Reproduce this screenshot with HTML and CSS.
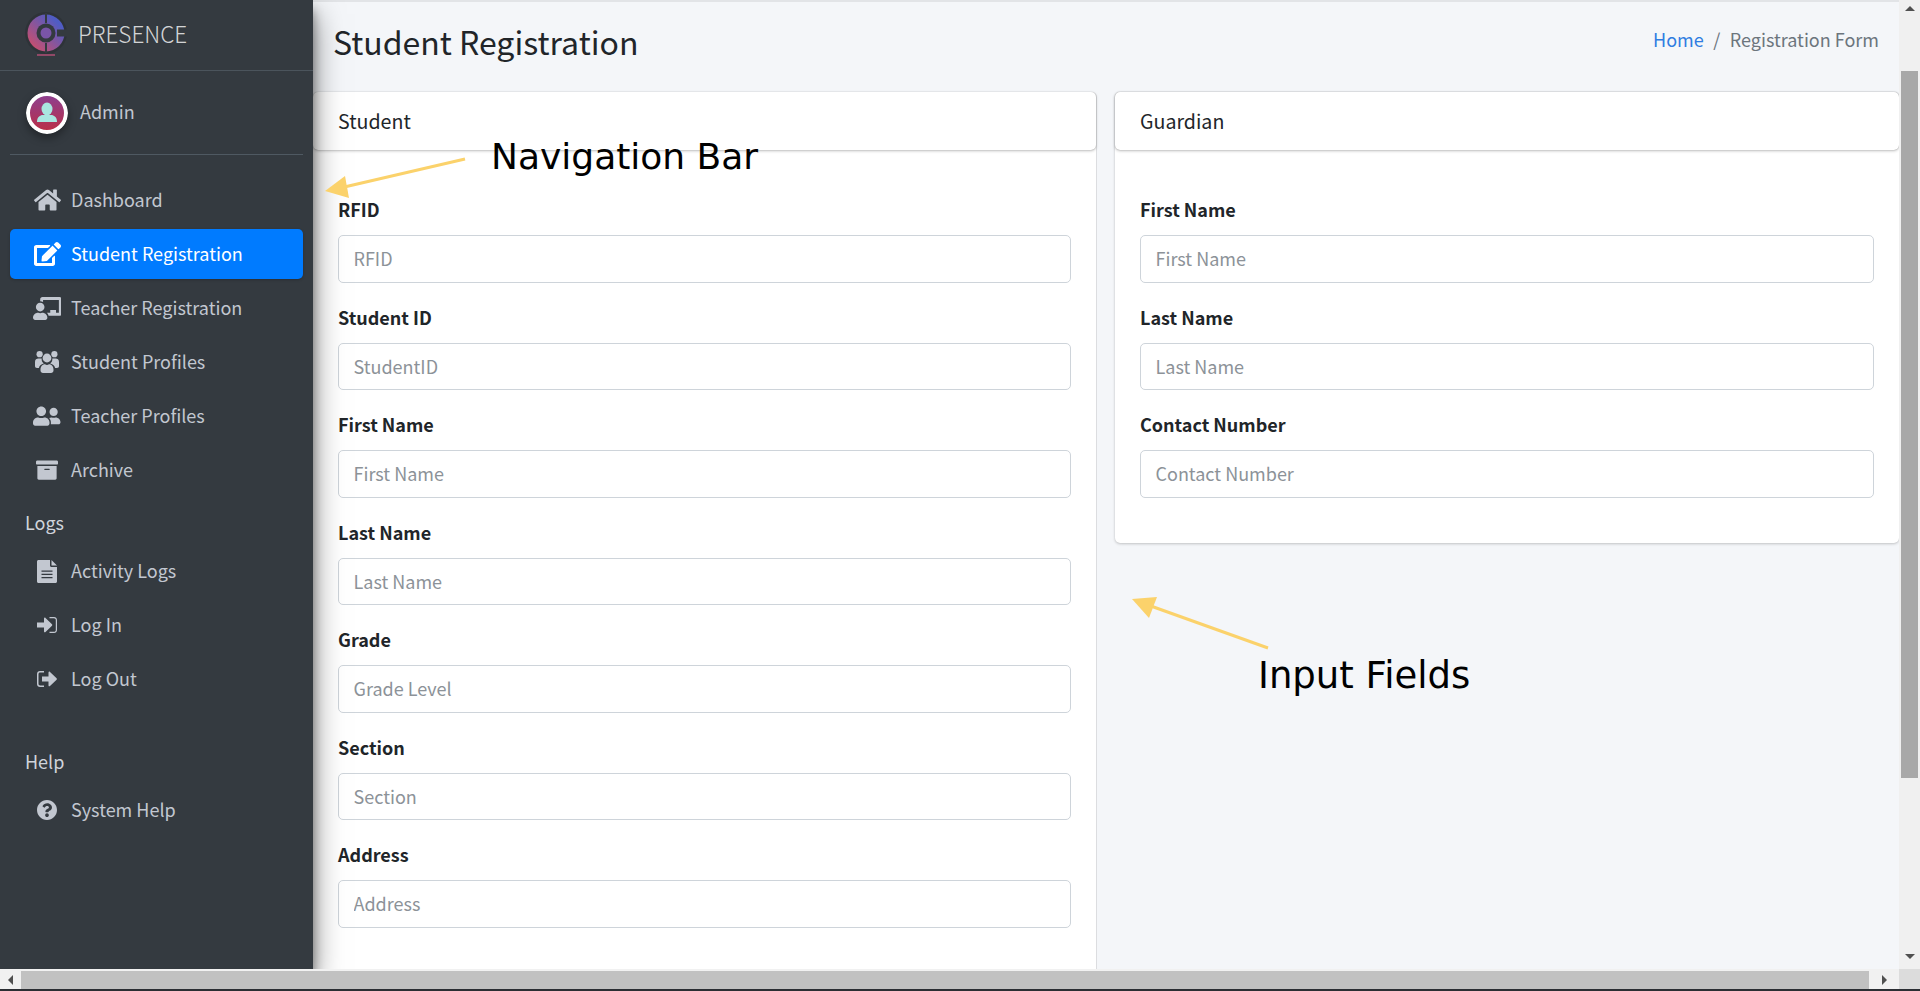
FILE: index.html
```html
<!DOCTYPE html>
<html lang="en">
<head>
  <meta charset="UTF-8" />
  <title>Student Registration</title>
  <link rel="stylesheet" href="styles.css">
</head>
<body>
  <div class="page">
    <div class="window">
      <aside class="sidebar">
        <div class="brand">
          <svg class="brand-logo" viewBox="0 0 44 48">
            <defs>
              <linearGradient id="logoGrad" x1="1" y1="0" x2="0" y2="1">
                <stop offset="0.2" stop-color="#4f5cc4"/>
                <stop offset="0.85" stop-color="#c24f72"/>
              </linearGradient>
            </defs>
            <circle cx="22" cy="22" r="21" fill="#2e3338"/>
            <circle cx="22" cy="22" r="18.5" fill="url(#logoGrad)"/>
            <rect x="33" y="18.5" width="11" height="7" fill="#343a40"/>
            <rect x="21" y="2" width="2" height="10" fill="#343a40"/>
            <rect x="21" y="32" width="2" height="10" fill="#343a40"/>
            <circle cx="22" cy="22" r="9.500" fill="#343a40"/>
            <circle cx="22" cy="22" r="5.500" fill="#7a55a8"/>
            <path d="M13 44h18" stroke="#b04f74" stroke-width="1.500"/>
          </svg>
          <span class="brand-text">PRESENCE</span>
        </div>

        <div class="user-panel">
          <svg class="avatar" viewBox="0 0 42 42">
            <defs>
              <linearGradient id="avatarGrad" x1="0" y1="0" x2="0" y2="1">
                <stop offset="0" stop-color="#8c3f92"/>
                <stop offset="1" stop-color="#bb2f45"/>
              </linearGradient>
            </defs>
            <circle cx="21" cy="21" r="19" fill="url(#avatarGrad)" stroke="#fff" stroke-width="4"/>
            <ellipse cx="21" cy="17" rx="5.500" ry="6.500" fill="#a9e6e0"/>
            <path d="M11 30c0-5 3-7 6-7h8c3 0 6 2 6 7z" fill="#a9e6e0"/>
          </svg>
          <span class="user-name">Admin</span>
        </div>

        <ul class="nav">
          <li><a class="nav-link"><span class="nav-icon"><svg class="icon-home" viewBox="0 0 576 512"><path d="M280.37 148.26L96 300.11V464a16 16 0 0 0 16 16l112.06-.29a16 16 0 0 0 15.92-16V368a16 16 0 0 1 16-16h64a16 16 0 0 1 16 16v95.64a16 16 0 0 0 16 16.05L464 480a16 16 0 0 0 16-16V300L295.67 148.26a12.19 12.19 0 0 0-15.3 0zM571.6 251.47L488 182.56V44.05a12 12 0 0 0-12-12h-56a12 12 0 0 0-12 12v72.61L318.47 43a48 48 0 0 0-61 0L4.34 251.47a12 12 0 0 0-1.6 16.9l25.5 31A12 12 0 0 0 45.15 301l235.22-193.74a12.19 12.19 0 0 1 15.3 0L530.9 301a12 12 0 0 0 16.9-1.6l25.5-31a12 12 0 0 0-1.7-16.93z"/></svg></span><span class="nav-text">Dashboard</span></a></li>
          <li><a class="nav-link active"><span class="nav-icon"><svg class="icon-edit" viewBox="0 0 576 512"><path d="M402.6 83.2l90.2 90.2c3.8 3.8 3.8 10 0 13.8L274.4 405.6l-92.8 10.3c-12.4 1.4-22.9-9.1-21.5-21.5l10.3-92.8L388.8 83.2c3.8-3.8 10-3.8 13.8 0zm162-22.9l-48.8-48.8c-15.2-15.2-39.9-15.2-55.2 0l-35.4 35.4c-3.8 3.8-3.8 10 0 13.8l90.2 90.2c3.8 3.8 10 3.8 13.8 0l35.4-35.4c15.2-15.3 15.2-40 0-55.2zM384 346.2V448H64V128h229.8c3.2 0 6.2-1.3 8.5-3.5l40-40c7.6-7.6 2.2-20.5-8.5-20.5H48C21.5 64 0 85.5 0 112v352c0 26.5 21.5 48 48 48h352c26.5 0 48-21.5 48-48V306.2c0-10.7-12.9-16-20.5-8.5l-40 40c-2.2 2.3-3.5 5.3-3.5 8.5z"/></svg></span><span class="nav-text">Student Registration</span></a></li>
          <li><a class="nav-link"><span class="nav-icon"><svg class="icon-board" viewBox="0 0 640 512"><path d="M208 352c-2.39 0-4.78.35-7.06 1.09C187.98 357.3 174.35 360 160 360c-14.35 0-27.98-2.7-40.95-6.91-2.28-.74-4.66-1.09-7.05-1.09C49.94 352-.33 402.48 0 464.62.14 490.88 21.73 512 48 512h224c26.27 0 47.86-21.12 48-47.38.33-62.14-49.94-112.62-112-112.62zm-48-32c53.02 0 96-42.98 96-96s-42.98-96-96-96-96 42.98-96 96 42.98 96 96 96zM592 0H208c-26.47 0-48 22.25-48 49.59V96c23.42 0 45.1 6.78 64 17.8V64h352v288h-64v-64H384v64h-76.24c19.1 16.69 33.12 38.73 39.69 64H592c26.47 0 48-22.25 48-49.59V49.59C640 22.25 618.47 0 592 0z"/></svg></span><span class="nav-text">Teacher Registration</span></a></li>
          <li><a class="nav-link"><span class="nav-icon"><svg class="icon-group" viewBox="0 0 24 22"><circle cx="4.600" cy="3.200" r="3.100"/><circle cx="19.400" cy="3.200" r="3.100"/><circle cx="12" cy="7" r="4.400"/><path d="M0 11c0-2.400 1.600-3.400 3.400-3.400h3.300c-.3 2.200 .6 4 2.100 5-2.800 .8-4.600 2.600-4.900 4.400H2c-1.300 0-2-.8-2-2z"/><path d="M24 11c0-2.400-1.600-3.400-3.400-3.400h-3.300c.3 2.200-.6 4-2.100 5 2.800 .8 4.600 2.600 4.900 4.400H22c1.300 0 2-.8 2-2z"/><path d="M5.500 18.500c0-3.400 2.500-5.200 4.500-5.200.7 .4 1.300 .6 2 .6s1.300-.2 2-.6c2 0 4.500 1.800 4.500 5.200v1c0 1.500-1.100 2.500-2.500 2.500H8c-1.400 0-2.500-1-2.500-2.500z"/></svg></span><span class="nav-text">Student Profiles</span></a></li>
          <li><a class="nav-link"><span class="nav-icon"><svg viewBox="0 0 640 512"><path d="M192 256c61.900 0 112-50.100 112-112S253.900 32 192 32 80 82.100 80 144s50.100 112 112 112zm76.800 32h-8.300c-20.800 10-43.900 16-68.500 16s-47.600-6-68.500-16h-8.300C51.600 288 0 339.600 0 403.200V432c0 26.500 21.500 48 48 48h288c26.500 0 48-21.500 48-48v-28.800c0-63.600-51.600-115.200-115.200-115.200zM480 256c53 0 96-43 96-96s-43-96-96-96-96 43-96 96 43 96 96 96zm48 32h-3.800c-13.900 4.800-28.600 8-44.200 8s-30.300-3.200-44.200-8H432c-20.400 0-39.200 5.900-55.700 15.400 24.400 26.300 39.700 61.200 39.700 99.800v38.400c0 2.200-.5 4.300-.6 6.400H592c26.500 0 48-21.500 48-48 0-61.900-50.100-112-112-112z"/></svg></span><span class="nav-text">Teacher Profiles</span></a></li>
          <li><a class="nav-link"><span class="nav-icon"><svg viewBox="0 0 512 512"><path d="M32 448c0 17.700 14.300 32 32 32h384c17.700 0 32-14.300 32-32V160H32v288zm160-212c0-6.600 5.400-12 12-12h104c6.600 0 12 5.400 12 12v8c0 6.600-5.400 12-12 12H204c-6.600 0-12-5.400-12-12v-8zM480 32H32C14.300 32 0 46.300 0 64v48c0 8.800 7.200 16 16 16h480c8.800 0 16-7.200 16-16V64c0-17.700-14.300-32-32-32z"/></svg></span><span class="nav-text">Archive</span></a></li>

          <li class="nav-header">Logs</li>
          <li><a class="nav-link"><span class="nav-icon"><svg class="icon-file" viewBox="0 0 20 23"><path d="M13 0H1.500C.7 0 0 .7 0 1.500v20C0 22.300 .7 23 1.500 23h17c.8 0 1.500-.7 1.500-1.500V7h-5.500C13.700 7 13 6.300 13 5.500zM14.500 0v5.500H20z"/><path d="M4.500 10.500h11v1.300h-11zM4.500 13.700h11V15h-11zM4.500 16.900h11v1.300h-11z" fill="#343a40"/></svg></span><span class="nav-text">Activity Logs</span></a></li>
          <li><a class="nav-link"><span class="nav-icon"><svg class="icon-sign" viewBox="0 0 20 16"><path d="M0 5.500h7V1.500c0-.8 .9-1.200 1.500-.6l6.500 6.300c.4 .4 .4 1.100 0 1.500l-6.500 6.300c-.6 .6-1.500 .2-1.500-.6v-4H0z"/><path d="M12.500 0H17c1.700 0 3 1.300 3 3v10c0 1.700-1.300 3-3 3h-4.500v-1.200H17c1 0 1.800-.8 1.800-1.800V3c0-1-.8-1.800-1.800-1.800h-4.500z"/></svg></span><span class="nav-text">Log In</span></a></li>
          <li><a class="nav-link"><span class="nav-icon"><svg class="icon-sign" viewBox="0 0 20 16"><path d="M7 0H3C1.300 0 0 1.300 0 3v10c0 1.700 1.300 3 3 3h4v-1.600H3.200c-1 0-1.700-.7-1.700-1.700V3.300c0-1 .7-1.700 1.700-1.700H7z"/><path d="M5 5.500h6.500V1.500c0-.8 .9-1.200 1.500-.6l6.600 6.300c.4 .4 .4 1.100 0 1.500L13 15c-.6 .6-1.500 .2-1.500-.6v-4H5z"/></svg></span><span class="nav-text">Log Out</span></a></li>

          <li class="nav-header help">Help</li>
          <li><a class="nav-link"><span class="nav-icon"><svg class="icon-help" viewBox="8 8 496 496"><path d="M504 256c0 136.997-111.043 248-248 248S8 392.997 8 256C8 119.083 119.043 8 256 8s248 111.083 248 248zM262.655 90c-54.497 0-89.255 22.957-116.549 63.758-3.536 5.286-2.353 12.415 2.715 16.258l34.699 26.31c5.205 3.947 12.621 3.008 16.665-2.122 17.864-22.658 30.113-35.797 57.303-35.797 20.429 0 45.698 13.148 45.698 32.958 0 14.976-12.363 22.667-32.534 33.976C247.128 238.528 216 254.941 216 296v4c0 6.627 5.373 12 12 12h56c6.627 0 12-5.373 12-12v-1.333c0-28.462 83.186-29.647 83.186-106.667 0-58.002-60.165-102-116.531-102zM256 338c-25.365 0-46 20.635-46 46 0 25.364 20.635 46 46 46s46-20.636 46-46c0-25.365-20.635-46-46-46z"/></svg></span><span class="nav-text">System Help</span></a></li>
        </ul>
      </aside>

      <main class="content">
        <header class="content-header">
          <h1>Student Registration</h1>
          <ol class="breadcrumb">
            <li><a>Home</a></li>
            <li class="sep">/</li>
            <li>Registration Form</li>
          </ol>
        </header>

        <div class="columns">
          <section class="card card-student">
            <div class="card-header">Student</div>
            <form class="card-body">
              <div class="form-group"><label>RFID</label><input type="text" placeholder="RFID"></div>
              <div class="form-group"><label>Student ID</label><input type="text" placeholder="StudentID"></div>
              <div class="form-group"><label>First Name</label><input type="text" placeholder="First Name"></div>
              <div class="form-group"><label>Last Name</label><input type="text" placeholder="Last Name"></div>
              <div class="form-group"><label>Grade</label><input type="text" placeholder="Grade Level"></div>
              <div class="form-group"><label>Section</label><input type="text" placeholder="Section"></div>
              <div class="form-group"><label>Address</label><input type="text" placeholder="Address"></div>
            </form>
          </section>

          <section class="card card-guardian">
            <div class="card-header">Guardian</div>
            <form class="card-body">
              <div class="form-group"><label>First Name</label><input type="text" placeholder="First Name"></div>
              <div class="form-group"><label>Last Name</label><input type="text" placeholder="Last Name"></div>
              <div class="form-group"><label>Contact Number</label><input type="text" placeholder="Contact Number"></div>
            </form>
          </section>
        </div>
      </main>

      <div class="vscroll">
        <span class="arrow arrow-up"></span>
        <div class="vscroll-thumb"></div>
        <span class="arrow arrow-down"></span>
      </div>
    </div>

    <div class="hscroll">
      <div class="hscroll-btn"><span class="arrow arrow-left"></span></div>
      <div class="hscroll-thumb"></div>
      <div class="hscroll-btn"><span class="arrow arrow-right"></span></div>
      <div class="hscroll-corner"></div>
    </div>
    <div class="taskbar"></div>

    <!-- annotations pasted on top of the screenshot -->
    <span class="note note-nav">Navigation Bar</span>
    <span class="note note-input">Input Fields</span>
    <svg class="note-arrows" viewBox="0 0 1920 991">
      <path d="M465 159L340 188" stroke="#fbd26b" stroke-width="3" fill="none"/>
      <path d="M325 191L345 176L349 198z" fill="#fbd26b"/>
      <path d="M1268 648L1148 605" stroke="#fbd26b" stroke-width="3" fill="none"/>
      <path d="M1132 599L1157 597L1149 618z" fill="#fbd26b"/>
    </svg>
  </div>
</body>
</html>
```

FILE: styles.css
```css
:root {
  --sidebar: #343a40;
  --sidebar-text: #c2c7d0;
  --content-bg: #f4f6f9;
  --text: #212529;
  --accent: #007bff;
}

* {
  box-sizing: border-box;
}

body {
  margin: 0;
  overflow: hidden;
  font-family: "Noto Sans CJK SC", "Noto Sans", sans-serif;
  font-size: 18px;
  line-height: 30px;
  color: var(--text);
  background: var(--content-bg);
}

.page {
  position: relative;
  width: 1920px;
  height: 991px;
  display: flex;
  flex-direction: column;
  overflow: hidden;
}

.window {
  display: flex;
  height: 969px;
  overflow: hidden;
}

/* sidebar */
.sidebar {
  position: relative;
  z-index: 2;
  flex: 0 0 313px;
  background: var(--sidebar);
  color: var(--sidebar-text);
  box-shadow: 0 14px 28px rgba(0,0,0,0.5), 0 10px 10px rgba(0,0,0,0.38);
}

.brand {
  display: flex;
  align-items: center;
  height: 71px;
  padding: 0 0 1px 24px;
  border-bottom: 1px solid #4b545c;
}

.brand-logo {
  width: 44px;
  height: 48px;
  margin-right: 10px;
}

.brand-text {
  margin-bottom: 3px;
  font-size: 22.5px;
  font-weight: 300;
  color: rgba(255,255,255,0.8);
}

.user-panel {
  display: flex;
  align-items: center;
  height: 84px;
  margin: 0 10px;
  padding-left: 16px;
  border-bottom: 1px solid #4f5962;
}

.avatar {
  width: 42px;
  height: 42px;
  margin-right: 12px;
  border-radius: 50%;
  box-shadow: 0 4px 8px rgba(0,0,0,0.35);
}

.user-name {
  margin-bottom: 3px;
}

.nav {
  list-style: none;
  margin: 0;
  padding: 20px 10px 0;
}

.nav-link {
  display: flex;
  align-items: center;
  height: 50px;
  margin-bottom: 4px;
  padding-left: 20px;
  border-radius: 5px;
  white-space: nowrap;
}

.nav-link.active {
  background: var(--accent);
  color: #fff;
  box-shadow: 0 1px 3px rgba(0,0,0,0.2);
}

.nav-text {
  margin-bottom: 2px;
}

.nav-icon {
  flex: 0 0 34px;
  margin-right: 7px;
  display: flex;
  justify-content: center;
}

.nav-icon svg {
  height: 22px;
  fill: currentColor;
}

.nav-icon .icon-home,
.nav-icon .icon-edit {
  height: 24px;
}

.nav-icon .icon-board {
  height: 23px;
}

.nav-icon .icon-file {
  height: 23px;
}

.nav-icon .icon-sign {
  height: 16px;
}

.nav-icon .icon-help {
  height: 20px;
}

.nav-header {
  height: 47px;
  padding: 8px 0 0 15px;
  color: #d0d4db;
}

.nav-header.help {
  margin-top: 34px;
}

/* content */
.content {
  flex: 1;
  min-width: 0;
  border-top: 2px solid #e2e4e7;
}

.content-header {
  display: flex;
  justify-content: space-between;
  height: 90px;
  padding: 17px 20px 0;
}

h1 {
  margin: 0;
  font-size: 32px;
  font-weight: 400;
  line-height: 44px;
}

.breadcrumb {
  display: flex;
  list-style: none;
  margin: 5px 0 0;
  padding: 0;
  color: #6c757d;
}

.breadcrumb a {
  color: #2f7de1;
}

.breadcrumb .sep {
  padding: 0 9.5px;
}

.columns {
  display: grid;
  grid-template-columns: 784px 784px;
  gap: 18px;
  align-items: start;
}

.card {
  background: #fff;
  border-radius: 5px;
}

.card-student {
  height: 900px;
  border-right: 1px solid #dcdde0;
}

.card-guardian {
  box-shadow: 0 0 1px rgba(0,0,0,0.13), 0 1px 3px rgba(0,0,0,0.2);
}

.card-header {
  height: 58px;
  padding: 14px 25px;
  font-size: 19.6px;
  background: #fff;
  border-radius: 5px;
  box-shadow: 0 0 1px rgba(0,0,0,0.3), 0 1px 3px rgba(0,0,0,0.25);
}

.card-body {
  padding: 45px 25px 25px;
}

.form-group {
  margin-bottom: 20px;
}

label {
  display: block;
  margin: -1px 0 11px;
  font-weight: 700;
}

input {
  display: block;
  width: 100%;
  height: 47.5px;
  padding: 0 15px 1px 14.5px;
  border: 1px solid #ced4da;
  border-radius: 5px;
  font: inherit;
  color: #495057;
  background: #fff;
}

input::placeholder {
  color: #8c9298;
  opacity: 1;
}

/* fake browser scrollbars */
.vscroll {
  flex: 0 0 21px;
  display: flex;
  flex-direction: column;
  align-items: center;
  background: #f0f0f0;
}

.vscroll-thumb {
  width: 17px;
  height: 707px;
  margin-top: 60px;
  background: #a8a8a8;
}

.hscroll {
  display: flex;
  height: 20px;
  padding-top: 2px;
  background: #f1f1f1;
}

.hscroll-btn {
  flex: 0 0 21px;
  display: flex;
  align-items: center;
  justify-content: center;
}

.hscroll-btn:nth-of-type(3) {
  flex-basis: 30px;
}

.hscroll-thumb {
  flex: 1;
  background: #c1c1c1;
}

.hscroll-corner {
  flex: 0 0 21px;
  margin-top: -2px;
  background: #dcdcdc;
}

.taskbar {
  height: 2px;
  background: #2b2e33;
}

.arrow {
  width: 0;
  height: 0;
  border: 5px solid transparent;
}

.arrow-up {
  margin-top: 6px;
  border-top: 0;
  border-bottom-color: #505050;
}

.arrow-down {
  margin-top: 176px;
  border-bottom: 0;
  border-top-color: #505050;
}

.arrow-left {
  border-left: 0;
  border-right-color: #505050;
}

.arrow-right {
  border-right: 0;
  border-left-color: #505050;
}

/* annotations */
.note {
  position: absolute;
  z-index: 3;
  font-family: "DejaVu Sans", sans-serif;
  font-size: 36px;
  line-height: 44px;
  color: #000;
  white-space: nowrap;
}

.note-nav {
  left: 491px;
  top: 135px;
}

.note-input {
  left: 1258px;
  top: 654px;
  font-size: 37px;
}

.note-arrows {
  position: absolute;
  z-index: 3;
  left: 0;
  top: 0;
  width: 1920px;
  height: 991px;
  pointer-events: none;
}
```
